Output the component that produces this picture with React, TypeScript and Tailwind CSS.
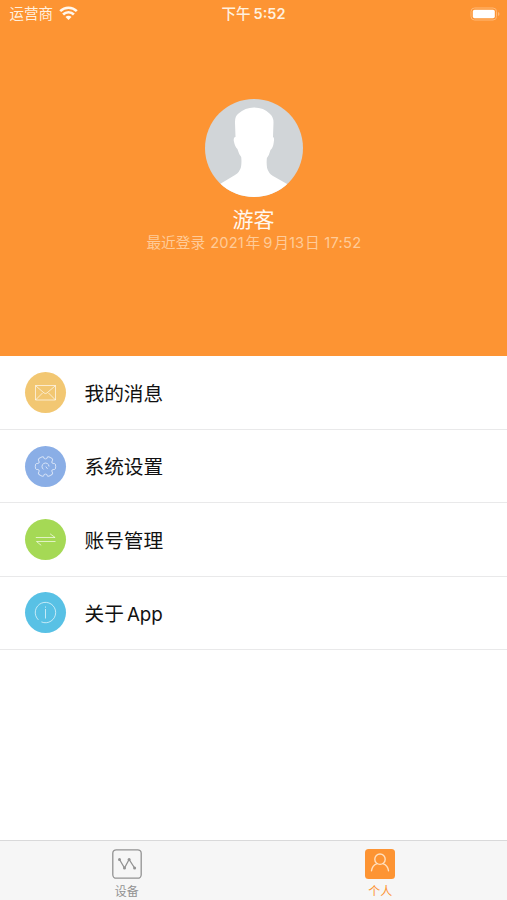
import type { ReactNode } from "react";

type Row = {
  key: string;
  color: string;
  label: ReactNode;
  icon: ReactNode;
};

const GEAR_ANGLES = [0, 60, 120, 180, 240, 300];

const ROWS: Row[] = [
  {
    key: "messages",
    color: "bg-[#f2c772]",
    label: "我的消息",
    icon: (
      <>
        <rect x="10.5" y="13.5" width="20" height="14.5" />
        <path d="M10.5 13.6l8.6 7.4q1.4 1.1 2.8 0l8.6-7.4M10.5 28l7-7M30.5 28l-7-7" />
      </>
    ),
  },
  {
    key: "settings",
    color: "bg-[#8aaee6]",
    label: "系统设置",
    icon: (
      <>
        {GEAR_ANGLES.map((angle) => (
          <path
            key={angle}
            d="M26.9 16.8q1.2 1 2.5.7 1.3 0 1.3 3t-1.3 3q-1.3-.3-2.5.7"
            transform={`rotate(${angle} 20.5 20.5)`}
          />
        ))}
        <path d="M18.5 23.4a3.5 3.5 0 1 1 5.5-2.9M20.8 20.6l1.8 2.3" />
      </>
    ),
  },
  {
    key: "account",
    color: "bg-[#a5d955]",
    label: "账号管理",
    icon: <path d="M10.8 18.5h19.3l-5-3.7M30.5 22.5H11.5l4.7 3.8" />,
  },
  {
    key: "about",
    color: "bg-[#58c1e5]",
    label: (
      <>
        关于<span className="ml-[3px] text-[18.8px]">App</span>
      </>
    ),
    icon: (
      <>
        <path d="M13.4 27.9a10.2 10.2 0 1 1 3 2" />
        <path d="M20.5 17v9.5M20.5 14.5v1.2" />
      </>
    ),
  },
];

function StatusBar() {
  return (
    <div className="grid h-7 grid-cols-3 items-center text-[14.5px] text-[#fff0df]">
      <div className="flex items-center gap-[6px] pl-[9.5px]">
        <span>运营商</span>
        <svg
          className="-mt-0.5"
          width="19"
          height="14"
          viewBox="0 0 19 14"
          fill="none"
          stroke="#fff8ef"
          strokeWidth="2.6"
        >
          <path d="M1.2 5.2a11.8 11.8 0 0 1 16.6 0M4.1 8.5a7.6 7.6 0 0 1 10.8 0" />
          <path d="M9.5 14L6.5 11a4.2 4.2 0 0 1 6 0z" fill="#fff8ef" stroke="none" />
        </svg>
      </div>
      <div className="flex items-center justify-center gap-[3px] font-medium">
        <span>下午</span>
        <span className="text-[14.5px] font-semibold">5:52</span>
      </div>
      <div className="-mt-px flex justify-end pr-[7px]">
        <svg width="30" height="14" viewBox="0 0 30 14" fill="none">
          <rect x="1" y="1" width="25.5" height="12" rx="3.5" stroke="#ffb876" />
          <rect x="2.8" y="2.8" width="22" height="8.4" rx="1.8" fill="#fff" />
          <path d="M28 5v4q1.5-.7 1.5-2T28 5z" fill="#ffb876" />
        </svg>
      </div>
    </div>
  );
}

function Avatar() {
  return (
    <svg className="h-[98px] w-[98px]" viewBox="0 0 98 98">
      <clipPath id="avatar">
        <circle cx="49" cy="49" r="49" />
      </clipPath>
      <g clipPath="url(#avatar)">
        <rect width="98" height="98" fill="#d1d5d8" />
        <path
          fill="#fff"
          d="M30.5 38L30 24q-.3-7 3.500-9.500Q40 8.500 49 8.500q10 0 15.500 6 4 3 4 9L68 38q1.600.3.800 5-.7 6-3.300 8-1.200 5-3.600 8-.6 5 .2 10 1.200 5 5.900 8l15 8.500L83 98H15V85l15-9q4.800-3 6-8 .8-5 .2-10-2.400-3-3.800-8-2.400-2-3.600-8-.5-4.500 1.700-4z"
        />
      </g>
    </svg>
  );
}

function Profile() {
  return (
    <div className="flex flex-col items-center pt-[70.5px]">
      <Avatar />
      <div className="mt-2 text-[21px] leading-[30px] text-[#fff7ee]">游客</div>
      <div className="flex h-4 items-center whitespace-nowrap pt-px pl-px text-[14.7px] leading-4 text-[#ffcb98]">
        <span>最近登录</span>
        <span className="ml-[5px] tracking-[0.15px]">2021</span>
        <span className="ml-[1.5px]">年</span>
        <span className="ml-[3px]">9</span>
        <span className="ml-[2px]">月</span>
        <span>13</span>
        <span className="ml-px">日</span>
        <span className="ml-[4.5px] tracking-[0.3px]">17:52</span>
      </div>
    </div>
  );
}

function MenuRow({ row }: { row: Row }) {
  return (
    <li className="flex h-[73.3px] items-center border-b-[1.5px] border-[#e9e9ea] pl-[25px]">
      <div className={"h-[41px] w-[41px] rounded-full " + row.color}>
        <svg
          width="41"
          height="41"
          viewBox="0 0 41 41"
          fill="none"
          stroke="#fff"
          strokeOpacity="0.65"
          strokeLinejoin="round"
        >
          {row.icon}
        </svg>
      </div>
      <span className="ml-[18.5px] pt-[3.5px] text-[19.7px] text-[#111]">{row.label}</span>
    </li>
  );
}

function TabBar() {
  return (
    <nav className="grid h-[60.5px] grid-cols-2 border-t border-[#d9d9da] bg-[#f6f6f6] text-[12px] leading-4">
      <div className="flex flex-col items-center pt-2 text-[#929292]">
        <svg width="30" height="30" viewBox="0 0 30 30" fill="none" stroke="currentColor">
          <rect x="0.8" y="0.8" width="28.4" height="28.4" rx="3.5" strokeWidth="1.3" />
          <path d="M7.5 10.5l5 8.5 4.6-8.5 5.5 8.5" strokeWidth="1.3" />
          <g fill="currentColor" stroke="none">
            <circle cx="7.5" cy="10.5" r="1.5" />
            <circle cx="12.5" cy="19" r="1.5" />
            <circle cx="17.1" cy="10.5" r="1.5" />
            <circle cx="22.6" cy="19" r="1.5" />
          </g>
        </svg>
        <span className="mt-[5px]">设备</span>
      </div>
      <div className="flex flex-col items-center pt-2 text-[#fd9433]">
        <svg width="30" height="30" viewBox="0 0 30 30" fill="none">
          <rect width="30" height="30" rx="3.5" fill="currentColor" />
          <g stroke="#ffe0bf" strokeWidth="1.4" strokeLinecap="round">
            <circle cx="15" cy="10.2" r="5.2" />
            <path d="M6.5 21.8A8.700 8.700 0 0 1 12 14.600M23.500 21.800A8.700 8.700 0 0 0 18 14.600" />
          </g>
        </svg>
        <span className="mt-[5px]">个人</span>
      </div>
    </nav>
  );
}

export default function App() {
  return (
    <div className="flex h-screen flex-col overflow-hidden bg-white font-[Inter,'Noto_Sans_CJK_SC',sans-serif]">
      <header className="h-[356px] shrink-0 bg-[#fd9433]">
        <StatusBar />
        <Profile />
      </header>
      <ul className="flex-1 pt-[0.8px]">
        {ROWS.map((row) => (
          <MenuRow key={row.key} row={row} />
        ))}
      </ul>
      <TabBar />
    </div>
  );
}
